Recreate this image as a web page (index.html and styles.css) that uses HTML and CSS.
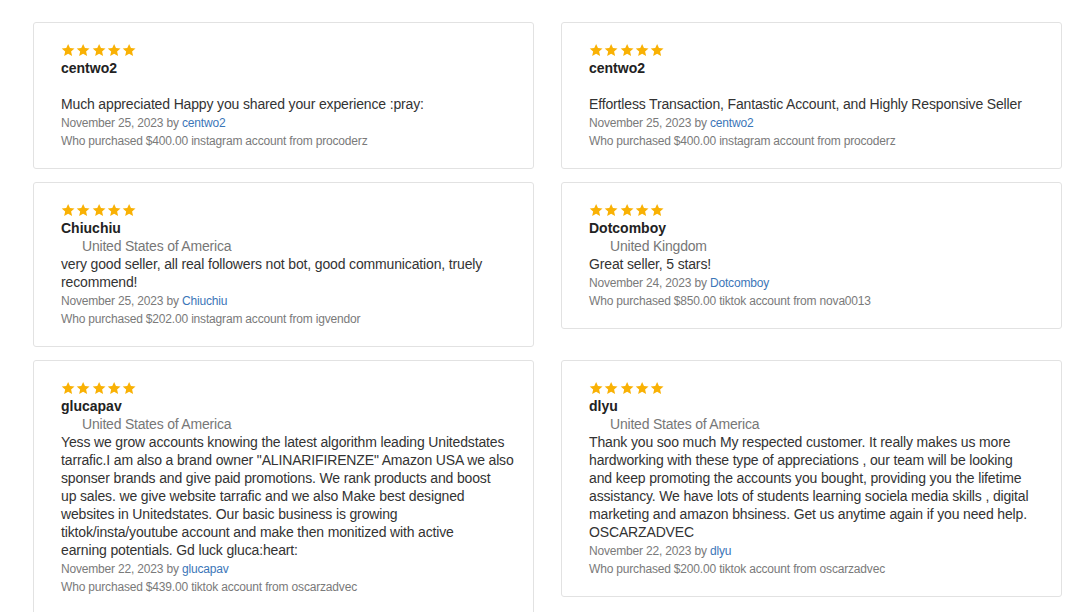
FILE: index.html
```html
<!DOCTYPE html>
<html>
<head>
<meta charset="utf-8">
<link rel="stylesheet" href="styles.css">
</head>
<body>
<div class="grid">
  <div class="card">
    <div class="stars"><svg viewBox="0 0 24 24"><path d="M12 1.5l3.1 7.1 7.7.7-5.8 5.1 1.7 7.6L12 18l-6.7 4 1.7-7.6-5.8-5.1 7.7-.7z"/></svg><svg viewBox="0 0 24 24"><path d="M12 1.5l3.1 7.1 7.7.7-5.8 5.1 1.7 7.6L12 18l-6.7 4 1.7-7.6-5.8-5.1 7.7-.7z"/></svg><svg viewBox="0 0 24 24"><path d="M12 1.5l3.1 7.1 7.7.7-5.8 5.1 1.7 7.6L12 18l-6.7 4 1.7-7.6-5.8-5.1 7.7-.7z"/></svg><svg viewBox="0 0 24 24"><path d="M12 1.5l3.1 7.1 7.7.7-5.8 5.1 1.7 7.6L12 18l-6.7 4 1.7-7.6-5.8-5.1 7.7-.7z"/></svg><svg viewBox="0 0 24 24"><path d="M12 1.5l3.1 7.1 7.7.7-5.8 5.1 1.7 7.6L12 18l-6.7 4 1.7-7.6-5.8-5.1 7.7-.7z"/></svg></div>
    <div class="name">centwo2</div>
    <div class="country"></div>
    <div class="text">Much appreciated Happy you shared your experience :pray:</div>
    <div class="meta date">November 25, 2023 by <a class="link">centwo2</a></div>
    <div class="meta">Who purchased $400.00 instagram account from procoderz</div>
  </div>
  <div class="card">
    <div class="stars"><svg viewBox="0 0 24 24"><path d="M12 1.5l3.1 7.1 7.7.7-5.8 5.1 1.7 7.6L12 18l-6.7 4 1.7-7.6-5.8-5.1 7.7-.7z"/></svg><svg viewBox="0 0 24 24"><path d="M12 1.5l3.1 7.1 7.7.7-5.8 5.1 1.7 7.6L12 18l-6.7 4 1.7-7.6-5.8-5.1 7.7-.7z"/></svg><svg viewBox="0 0 24 24"><path d="M12 1.5l3.1 7.1 7.7.7-5.8 5.1 1.7 7.6L12 18l-6.7 4 1.7-7.6-5.8-5.1 7.7-.7z"/></svg><svg viewBox="0 0 24 24"><path d="M12 1.5l3.1 7.1 7.7.7-5.8 5.1 1.7 7.6L12 18l-6.7 4 1.7-7.6-5.8-5.1 7.7-.7z"/></svg><svg viewBox="0 0 24 24"><path d="M12 1.5l3.1 7.1 7.7.7-5.8 5.1 1.7 7.6L12 18l-6.7 4 1.7-7.6-5.8-5.1 7.7-.7z"/></svg></div>
    <div class="name">centwo2</div>
    <div class="country"></div>
    <div class="text">Effortless Transaction, Fantastic Account, and Highly Responsive Seller</div>
    <div class="meta date">November 25, 2023 by <a class="link">centwo2</a></div>
    <div class="meta">Who purchased $400.00 instagram account from procoderz</div>
  </div>
  <div class="card">
    <div class="stars"><svg viewBox="0 0 24 24"><path d="M12 1.5l3.1 7.1 7.7.7-5.8 5.1 1.7 7.6L12 18l-6.7 4 1.7-7.6-5.8-5.1 7.7-.7z"/></svg><svg viewBox="0 0 24 24"><path d="M12 1.5l3.1 7.1 7.7.7-5.8 5.1 1.7 7.6L12 18l-6.7 4 1.7-7.6-5.8-5.1 7.7-.7z"/></svg><svg viewBox="0 0 24 24"><path d="M12 1.5l3.1 7.1 7.7.7-5.8 5.1 1.7 7.6L12 18l-6.7 4 1.7-7.6-5.8-5.1 7.7-.7z"/></svg><svg viewBox="0 0 24 24"><path d="M12 1.5l3.1 7.1 7.7.7-5.8 5.1 1.7 7.6L12 18l-6.7 4 1.7-7.6-5.8-5.1 7.7-.7z"/></svg><svg viewBox="0 0 24 24"><path d="M12 1.5l3.1 7.1 7.7.7-5.8 5.1 1.7 7.6L12 18l-6.7 4 1.7-7.6-5.8-5.1 7.7-.7z"/></svg></div>
    <div class="name">Chiuchiu</div>
    <div class="country">United States of America</div>
    <div class="text">very good seller, all real followers not bot, good communication, truely<br>recommend!</div>
    <div class="meta date">November 25, 2023 by <a class="link">Chiuchiu</a></div>
    <div class="meta">Who purchased $202.00 instagram account from igvendor</div>
  </div>
  <div class="card">
    <div class="stars"><svg viewBox="0 0 24 24"><path d="M12 1.5l3.1 7.1 7.7.7-5.8 5.1 1.7 7.6L12 18l-6.7 4 1.7-7.6-5.8-5.1 7.7-.7z"/></svg><svg viewBox="0 0 24 24"><path d="M12 1.5l3.1 7.1 7.7.7-5.8 5.1 1.7 7.6L12 18l-6.7 4 1.7-7.6-5.8-5.1 7.7-.7z"/></svg><svg viewBox="0 0 24 24"><path d="M12 1.5l3.1 7.1 7.7.7-5.8 5.1 1.7 7.6L12 18l-6.7 4 1.7-7.6-5.8-5.1 7.7-.7z"/></svg><svg viewBox="0 0 24 24"><path d="M12 1.5l3.1 7.1 7.7.7-5.8 5.1 1.7 7.6L12 18l-6.7 4 1.7-7.6-5.8-5.1 7.7-.7z"/></svg><svg viewBox="0 0 24 24"><path d="M12 1.5l3.1 7.1 7.7.7-5.8 5.1 1.7 7.6L12 18l-6.7 4 1.7-7.6-5.8-5.1 7.7-.7z"/></svg></div>
    <div class="name">Dotcomboy</div>
    <div class="country">United Kingdom</div>
    <div class="text">Great seller, 5 stars!</div>
    <div class="meta date">November 24, 2023 by <a class="link">Dotcomboy</a></div>
    <div class="meta">Who purchased $850.00 tiktok account from nova0013</div>
  </div>
  <div class="card">
    <div class="stars"><svg viewBox="0 0 24 24"><path d="M12 1.5l3.1 7.1 7.7.7-5.8 5.1 1.7 7.6L12 18l-6.7 4 1.7-7.6-5.8-5.1 7.7-.7z"/></svg><svg viewBox="0 0 24 24"><path d="M12 1.5l3.1 7.1 7.7.7-5.8 5.1 1.7 7.6L12 18l-6.7 4 1.7-7.6-5.8-5.1 7.7-.7z"/></svg><svg viewBox="0 0 24 24"><path d="M12 1.5l3.1 7.1 7.7.7-5.8 5.1 1.7 7.6L12 18l-6.7 4 1.7-7.6-5.8-5.1 7.7-.7z"/></svg><svg viewBox="0 0 24 24"><path d="M12 1.5l3.1 7.1 7.7.7-5.8 5.1 1.7 7.6L12 18l-6.7 4 1.7-7.6-5.8-5.1 7.7-.7z"/></svg><svg viewBox="0 0 24 24"><path d="M12 1.5l3.1 7.1 7.7.7-5.8 5.1 1.7 7.6L12 18l-6.7 4 1.7-7.6-5.8-5.1 7.7-.7z"/></svg></div>
    <div class="name">glucapav</div>
    <div class="country">United States of America</div>
    <div class="text">Yess we grow accounts knowing the latest algorithm leading Unitedstates<br>tarrafic.I am also a brand owner "ALINARIFIRENZE" Amazon USA we also<br>sponser brands and give paid promotions. We rank products and boost<br>up sales. we give website tarrafic and we also Make best designed<br>websites in Unitedstates. Our basic business is growing<br>tiktok/insta/youtube account and make then monitized with active<br>earning potentials. Gd luck gluca:heart:</div>
    <div class="meta date">November 22, 2023 by <a class="link">glucapav</a></div>
    <div class="meta">Who purchased $439.00 tiktok account from oscarzadvec</div>
  </div>
  <div class="card">
    <div class="stars"><svg viewBox="0 0 24 24"><path d="M12 1.5l3.1 7.1 7.7.7-5.8 5.1 1.7 7.6L12 18l-6.7 4 1.7-7.6-5.8-5.1 7.7-.7z"/></svg><svg viewBox="0 0 24 24"><path d="M12 1.5l3.1 7.1 7.7.7-5.8 5.1 1.7 7.6L12 18l-6.7 4 1.7-7.6-5.8-5.1 7.7-.7z"/></svg><svg viewBox="0 0 24 24"><path d="M12 1.5l3.1 7.1 7.7.7-5.8 5.1 1.7 7.6L12 18l-6.7 4 1.7-7.6-5.8-5.1 7.7-.7z"/></svg><svg viewBox="0 0 24 24"><path d="M12 1.5l3.1 7.1 7.7.7-5.8 5.1 1.7 7.6L12 18l-6.7 4 1.7-7.6-5.8-5.1 7.7-.7z"/></svg><svg viewBox="0 0 24 24"><path d="M12 1.5l3.1 7.1 7.7.7-5.8 5.1 1.7 7.6L12 18l-6.7 4 1.7-7.6-5.8-5.1 7.7-.7z"/></svg></div>
    <div class="name">dlyu</div>
    <div class="country">United States of America</div>
    <div class="text">Thank you soo much My respected customer. It really makes us more<br>hardworking with these type of appreciations , our team will be looking<br>and keep promoting the accounts you bought, providing you the lifetime<br>assistancy. We have lots of students learning sociela media skills , digital<br>marketing and amazon bhsiness. Get us anytime again if you need help.<br>OSCARZADVEC</div>
    <div class="meta date">November 22, 2023 by <a class="link">dlyu</a></div>
    <div class="meta">Who purchased $200.00 tiktok account from oscarzadvec</div>
  </div>
</div>
</body>
</html>
```
FILE: styles.css
```css
html, body {
  margin: 0;
  padding: 0;
  background: #ffffff;
}
body {
  font-family: "Liberation Sans", Arial, sans-serif;
  color: #333333;
}
.grid {
  display: grid;
  grid-template-columns: 501px 501px;
  column-gap: 27px;
  row-gap: 13px;
  align-items: start;
  padding: 22px 0 0 33px;
}
.card {
  border: 1px solid #e2e2e2;
  border-radius: 3px;
  padding: 18px 10px 18px 27px;
  display: flex;
  flex-direction: column;
}
.stars {
  display: flex;
  align-items: center;
  gap: 1px;
  height: 18px;
}
.stars svg {
  width: 14.25px;
  height: 14.25px;
  fill: #f9b104;
}
.name {
  font-size: 14px;
  font-weight: bold;
  line-height: 18px;
  color: #222222;
}
.country {
  font-size: 14px;
  line-height: 18px;
  height: 18px;
  color: #777777;
  padding-left: 21px;
  letter-spacing: -0.2px;
}
.text {
  font-size: 14px;
  line-height: 18px;
  color: #333333;
  letter-spacing: -0.15px;
}
.meta {
  font-size: 12px;
  line-height: 18px;
  color: #7a7a7a;
  letter-spacing: -0.18px;
}
.date {
  margin-top: 1px;
}
.link {
  color: #3b76b8;
  text-decoration: none;
}
```
